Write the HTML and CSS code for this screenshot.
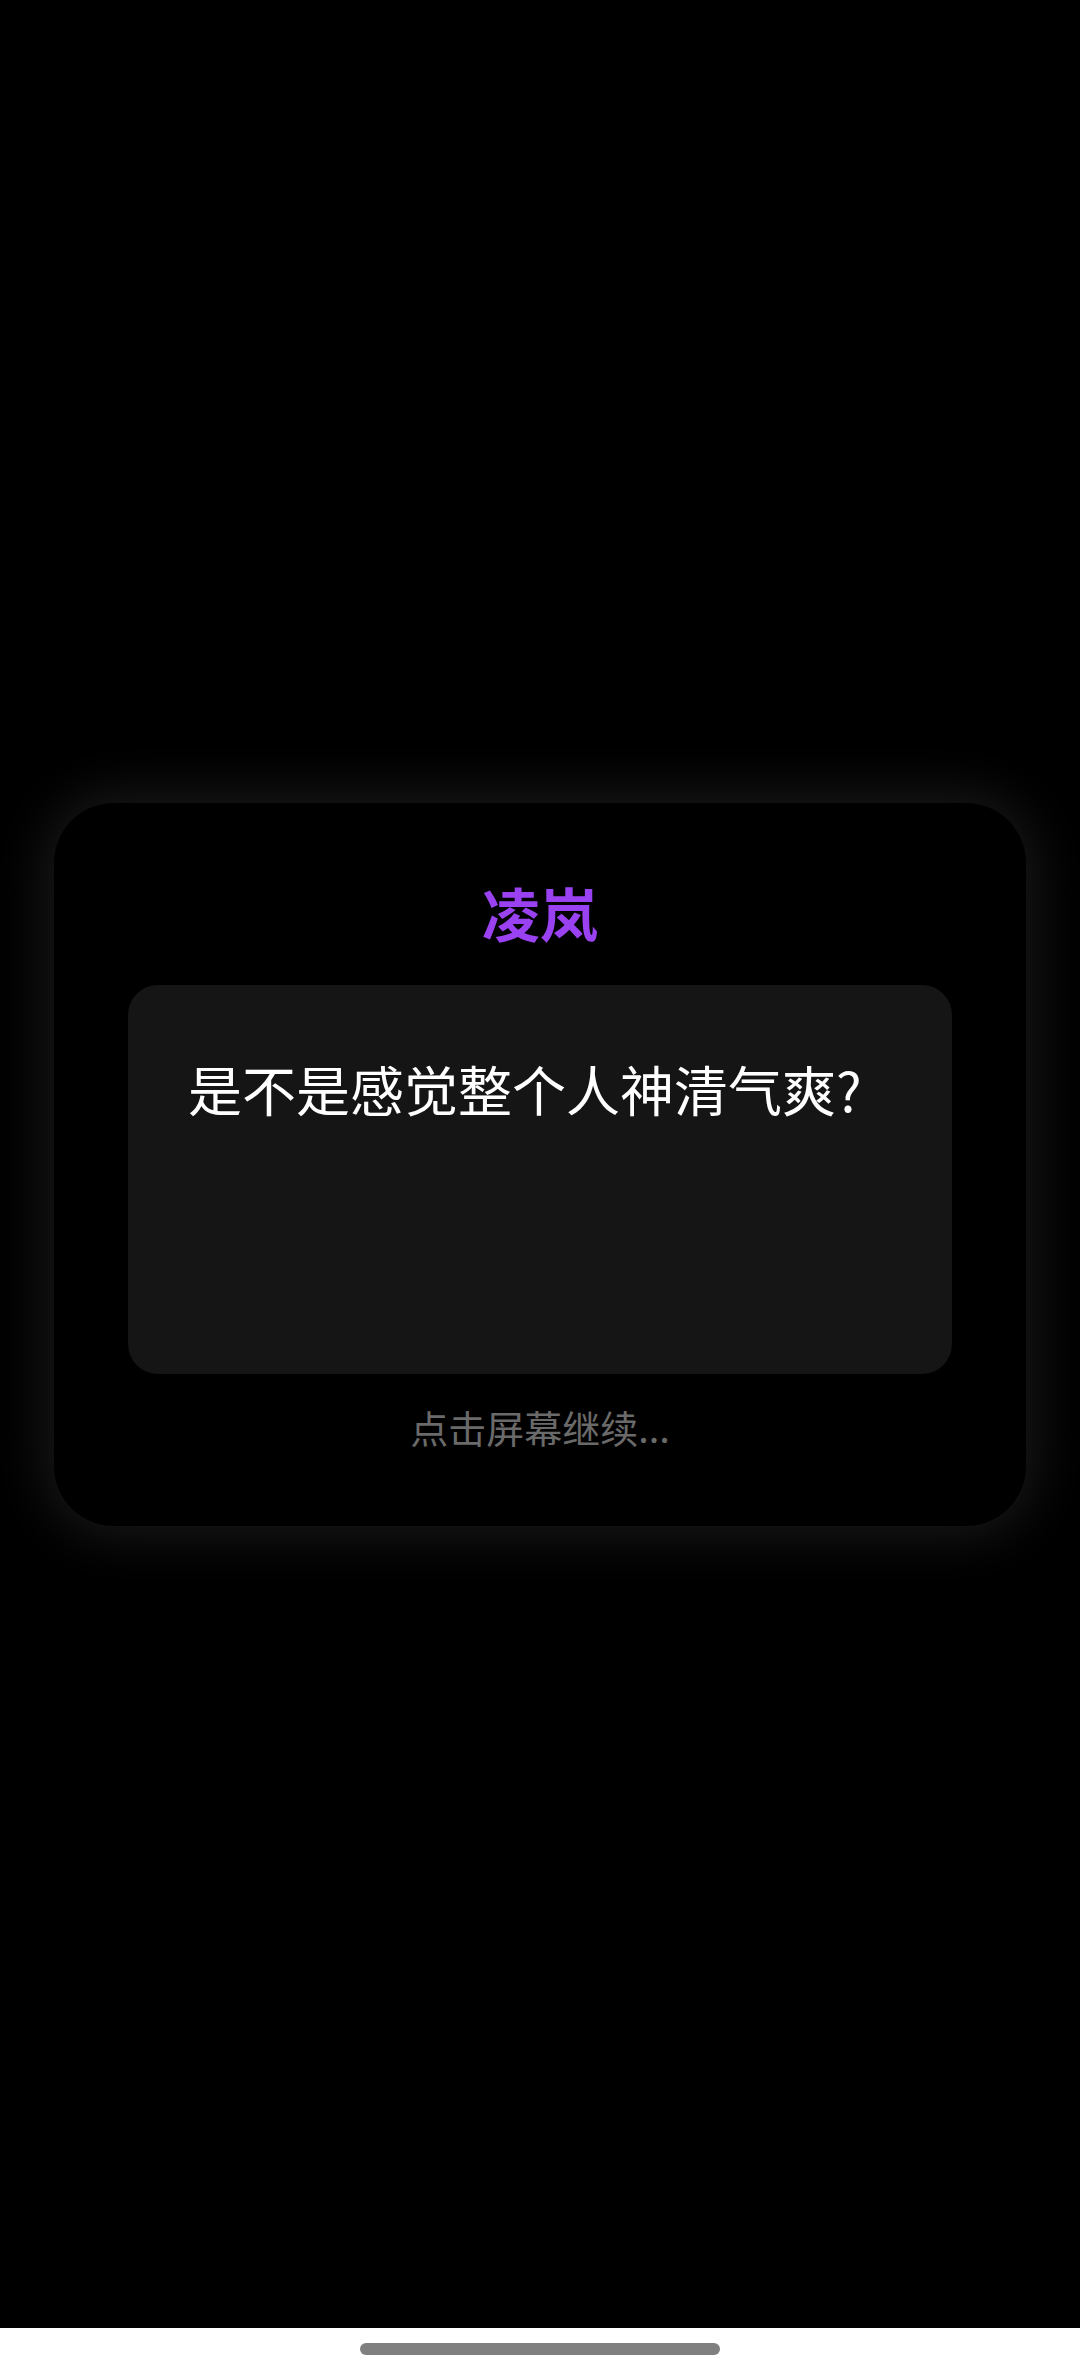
FILE: index.html
```html
<!DOCTYPE html>
<html lang="zh-CN">
<head>
<meta charset="utf-8">
<title>对话</title>
<link rel="stylesheet" href="styles.css">
</head>
<body>
<div class="screen">
  <main class="stage">
    <section class="card">
      <h1 class="speaker">凌岚</h1>
      <div class="bubble">
        <p class="line">是不是感觉整个人神清气爽?</p>
      </div>
      <p class="hint">点击屏幕继续...</p>
    </section>
  </main>
  <footer class="navbar">
    <div class="handle"></div>
  </footer>
</div>
</body>
</html>
```
FILE: styles.css
```css
html, body {
  margin: 0;
  padding: 0;
  background: #000;
}
body {
  font-family: "Noto Sans CJK SC", "Noto Sans", sans-serif;
}
.screen {
  width: 1080px;
  height: 2376px;
  display: flex;
  flex-direction: column;
  background: #000;
}
.stage {
  flex: 1;
  display: flex;
  align-items: center;
  justify-content: center;
}
.card {
  width: 972px;
  box-sizing: border-box;
  height: 723px;
  background: #000;
  border-radius: 60px;
  box-shadow: 0 0 55px 6px #1c1c1c;
  padding: 74px 74px 0 74px;
  display: flex;
  flex-direction: column;
  align-items: stretch;
}
.speaker {
  margin: 0;
  text-align: center;
  font-size: 58px;
  line-height: 70px;
  font-weight: 700;
  color: #9a42f2;
}
.bubble {
  margin-top: 38px;
  height: 389px;
  box-sizing: border-box;
  background: #151515;
  border-radius: 30px;
  padding: 66px 60px 0 60px;
}
.line {
  margin: 0;
  color: #fff;
  font-size: 54px;
  line-height: 76px;
  font-weight: 400;
}
.hint {
  margin: 28px 0 0 0;
  text-align: center;
  color: #6a6a6a;
  font-size: 38px;
  line-height: 50px;
}
.navbar {
  height: 48px;
  background: #fff;
  display: flex;
  justify-content: center;
  padding-top: 15px;
  box-sizing: border-box;
}
.handle {
  width: 360px;
  height: 12px;
  border-radius: 6px;
  background: #808080;
}
```
